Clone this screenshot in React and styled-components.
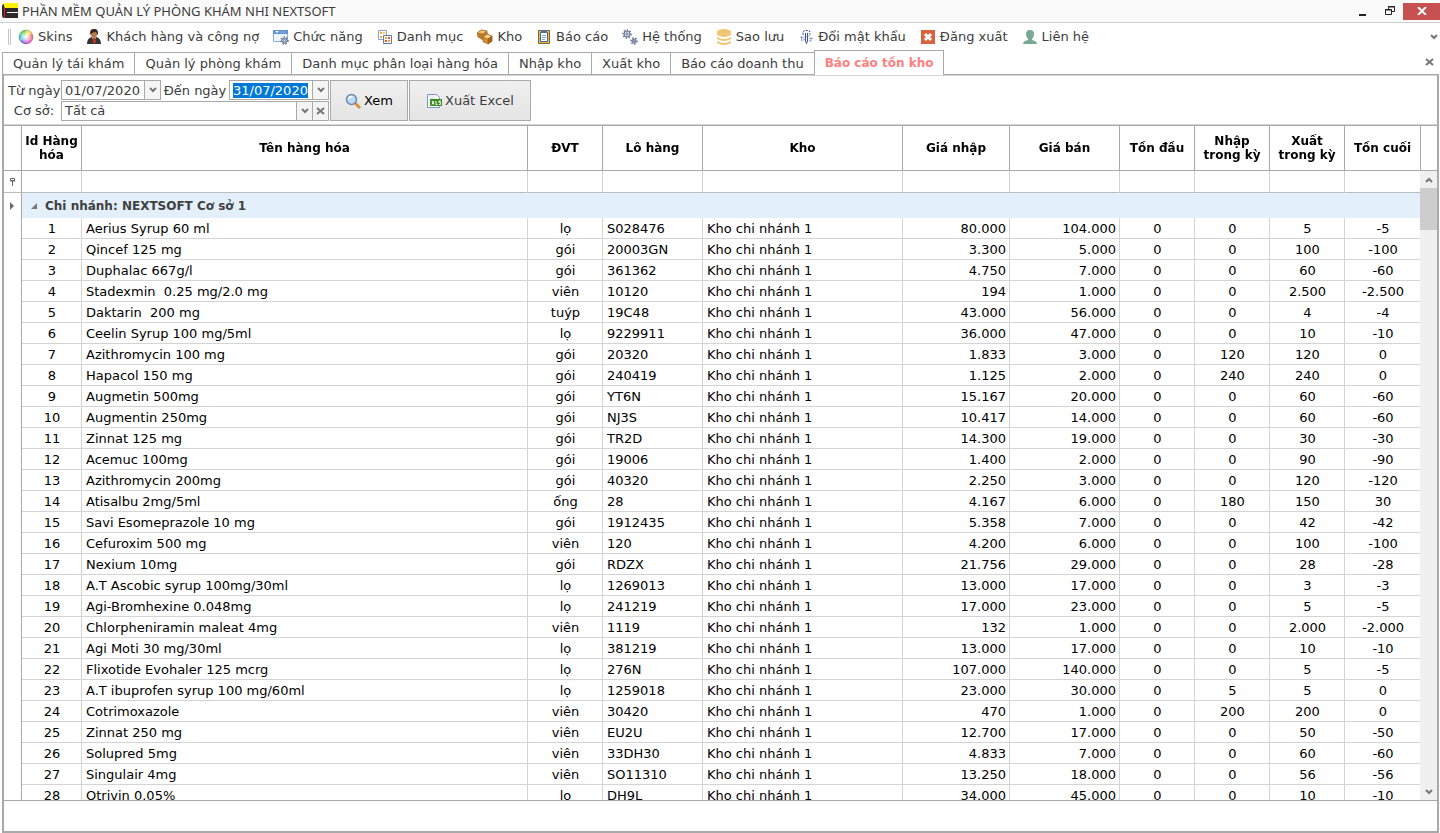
import React, { useEffect, useRef } from "react";
import styled, { createGlobalStyle } from "styled-components";

const menuItems = [
  { label: "Skins", icon: "skins" },
  { label: "Khách hàng và công nợ", icon: "customer" },
  { label: "Chức năng", icon: "feature" },
  { label: "Danh mục", icon: "category" },
  { label: "Kho", icon: "stock" },
  { label: "Báo cáo", icon: "report" },
  { label: "Hệ thống", icon: "system" },
  { label: "Sao lưu", icon: "backup" },
  { label: "Đổi mật khẩu", icon: "password" },
  { label: "Đăng xuất", icon: "logout" },
  { label: "Liên hệ", icon: "contact" },
];

const tabs = [
  "Quản lý tái khám",
  "Quản lý phòng khám",
  "Danh mục phân loại hàng hóa",
  "Nhập kho",
  "Xuất kho",
  "Báo cáo doanh thu",
  "Báo cáo tồn kho",
];

const columns = [
  { title: "Id Hàng hóa", width: 60, align: "center" },
  { title: "Tên hàng hóa", align: "left" },
  { title: "ĐVT", width: 75, align: "center" },
  { title: "Lô hàng", width: 100, align: "left" },
  { title: "Kho", width: 200, align: "left" },
  { title: "Giá nhập", width: 107, align: "right" },
  { title: "Giá bán", width: 110, align: "right" },
  { title: "Tồn đầu", width: 75, align: "center" },
  { title: "Nhập trong kỳ", width: 75, align: "center" },
  { title: "Xuất trong kỳ", width: 75, align: "center" },
  { title: "Tồn cuối", width: 75, align: "center" },
];

// name, unit, lot, buy price, sell price, in, out, closing
const products = [
  ["Aerius Syrup 60 ml", "lọ", "S028476", "80.000", "104.000", "0", "5", "-5"],
  ["Qincef 125 mg", "gói", "20003GN", "3.300", "5.000", "0", "100", "-100"],
  ["Duphalac 667g/l", "gói", "361362", "4.750", "7.000", "0", "60", "-60"],
  ["Stadexmin  0.25 mg/2.0 mg", "viên", "10120", "194", "1.000", "0", "2.500", "-2.500"],
  ["Daktarin  200 mg", "tuýp", "19C48", "43.000", "56.000", "0", "4", "-4"],
  ["Ceelin Syrup 100 mg/5ml", "lọ", "9229911", "36.000", "47.000", "0", "10", "-10"],
  ["Azithromycin 100 mg", "gói", "20320", "1.833", "3.000", "120", "120", "0"],
  ["Hapacol 150 mg", "gói", "240419", "1.125", "2.000", "240", "240", "0"],
  ["Augmetin 500mg", "gói", "YT6N", "15.167", "20.000", "0", "60", "-60"],
  ["Augmentin 250mg", "gói", "NJ3S", "10.417", "14.000", "0", "60", "-60"],
  ["Zinnat 125 mg", "gói", "TR2D", "14.300", "19.000", "0", "30", "-30"],
  ["Acemuc 100mg", "gói", "19006", "1.400", "2.000", "0", "90", "-90"],
  ["Azithromycin 200mg", "gói", "40320", "2.250", "3.000", "0", "120", "-120"],
  ["Atisalbu 2mg/5ml", "ống", "28", "4.167", "6.000", "180", "150", "30"],
  ["Savi Esomeprazole 10 mg", "gói", "1912435", "5.358", "7.000", "0", "42", "-42"],
  ["Cefuroxim 500 mg", "viên", "120", "4.200", "6.000", "0", "100", "-100"],
  ["Nexium 10mg", "gói", "RDZX", "21.756", "29.000", "0", "28", "-28"],
  ["A.T Ascobic syrup 100mg/30ml", "lọ", "1269013", "13.000", "17.000", "0", "3", "-3"],
  ["Agi-Bromhexine 0.048mg", "lọ", "241219", "17.000", "23.000", "0", "5", "-5"],
  ["Chlorpheniramin maleat 4mg", "viên", "1119", "132", "1.000", "0", "2.000", "-2.000"],
  ["Agi Moti 30 mg/30ml", "lọ", "381219", "13.000", "17.000", "0", "10", "-10"],
  ["Flixotide Evohaler 125 mcrg", "lọ", "276N", "107.000", "140.000", "0", "5", "-5"],
  ["A.T ibuprofen syrup 100 mg/60ml", "lọ", "1259018", "23.000", "30.000", "5", "5", "0"],
  ["Cotrimoxazole", "viên", "30420", "470", "1.000", "200", "200", "0"],
  ["Zinnat 250 mg", "viên", "EU2U", "12.700", "17.000", "0", "50", "-50"],
  ["Solupred 5mg", "viên", "33DH30", "4.833", "7.000", "0", "60", "-60"],
  ["Singulair 4mg", "viên", "SO11310", "13.250", "18.000", "0", "56", "-56"],
  ["Otrivin 0.05%", "lọ", "DH9L", "34.000", "45.000", "0", "10", "-10"],
];

const rows = products.map(([name, unit, lot, buy, sell, inQty, outQty, closing], i) => [
  i + 1, name, unit, lot, "Kho chi nhánh 1", buy, sell, "0", inQty, outQty, closing,
]);

function App() {
  return (
    <Window>
      <GlobalStyle />
      <TitleBar />
      <MenuBar />
      <TabBar />
      <Frame>
        <Filters />
        <StockGrid />
        <Footer />
      </Frame>
    </Window>
  );
}

export default App;

function TitleBar() {
  return (
    <Title>
      <Icon name="app" />
      <h1>PHẦN MỀM QUẢN LÝ PHÒNG KHÁM NHI NEXTSOFT</h1>
      <WindowButton aria-label="Minimize">
        <svg width="12" height="12" viewBox="0 0 12 12">
          <path d="M2 9h7v2H2z" fill="#222" />
        </svg>
      </WindowButton>
      <WindowButton aria-label="Restore">
        <svg width="12" height="12" viewBox="0 0 12 12" fill="none" stroke="#222">
          <path d="M4.500 4V1.500h6v5H8M4 2h7" />
          <path d="M1.500 4.500h6v5h-6zM1 5h7" />
        </svg>
      </WindowButton>
      <WindowButton aria-label="Close" $danger>
        <svg width="10" height="8" viewBox="0 0 10 8">
          <path d="M1 0l8 8M9 0L1 8" stroke="#fff" strokeWidth="2" />
        </svg>
      </WindowButton>
    </Title>
  );
}

function MenuBar() {
  return (
    <Menu>
      <Grip />
      {menuItems.map((item) => (
        <MenuButton key={item.label}>
          <Icon name={item.icon} />
          {item.label}
        </MenuButton>
      ))}
      <MoreButton aria-label="More">
        <Chevron />
      </MoreButton>
    </Menu>
  );
}

function TabBar() {
  return (
    <TabList>
      {tabs.map((tab) => (
        <Tab key={tab} $active={tab === "Báo cáo tồn kho"}>{tab}</Tab>
      ))}
      <MoreButton aria-label="Close tab">
        <Cross />
      </MoreButton>
    </TabList>
  );
}

function Filters() {
  const toDate = useRef(null);

  useEffect(() => {
    toDate.current.focus();
    toDate.current.select();
  }, []);

  return (
    <FilterBar>
      <Fields>
        <label htmlFor="from">Từ ngày</label>
        <Field>
          <input id="from" defaultValue="01/07/2020" />
          <FieldButton aria-label="Open calendar"><Chevron /></FieldButton>
        </Field>
        <label htmlFor="to">Đến ngày</label>
        <Field>
          <input id="to" ref={toDate} defaultValue="31/07/2020" />
          <FieldButton aria-label="Open calendar"><Chevron /></FieldButton>
        </Field>
        <label htmlFor="branch">Cơ sở:</label>
        <Field $wide>
          <select id="branch">
            <option>Tất cả</option>
          </select>
          <FieldButton aria-label="Open list"><Chevron /></FieldButton>
          <FieldButton aria-label="Clear"><Cross /></FieldButton>
        </Field>
      </Fields>
      <ActionButton $primary>
        <Icon name="search" />
        Xem
      </ActionButton>
      <ActionButton>
        <Icon name="excel" />
        Xuất Excel
      </ActionButton>
    </FilterBar>
  );
}

function StockGrid() {
  return (
    <Grid>
      <Scroller>
        <Table>
          <colgroup>
            <Col $width={18} />
            {columns.map((c) => <Col key={c.title} $width={c.width} />)}
          </colgroup>
          <thead>
            <tr>
              <HeadCell />
              {columns.map((c) => <HeadCell key={c.title}>{c.title}</HeadCell>)}
            </tr>
            <tr>
              <FilterCell $indicator>
                <svg width="7" height="9" viewBox="0 0 7 9" fill="none" stroke="#666">
                  <path d="M1.500 1.500h4v2h-4zM1 4h5M3.500 4v5" />
                </svg>
              </FilterCell>
              {columns.map((c) => <FilterCell key={c.title} />)}
            </tr>
          </thead>
          <tbody>
            <tr>
              <Indicator>
                <svg width="5" height="8" viewBox="0 0 5 8">
                  <path d="M0 0l4 4-4 4z" fill="#6a6a6a" />
                </svg>
              </Indicator>
              <GroupCell colSpan={columns.length}>
                <svg width="7" height="7" viewBox="0 0 7 7">
                  <path d="M6 0v6H0z" fill="#777" />
                </svg>
                Chi nhánh: NEXTSOFT Cơ sở 1
              </GroupCell>
            </tr>
            {rows.map((row) => (
              <tr key={row[0]}>
                <Indicator />
                {row.map((value, i) => (
                  <Cell key={columns[i].title} $align={columns[i].align}>{value}</Cell>
                ))}
              </tr>
            ))}
          </tbody>
        </Table>
      </Scroller>
      <ScrollBar>
        <ScrollCorner />
        <ScrollArrow aria-label="Scroll up"><Chevron up /></ScrollArrow>
        <Thumb />
        <ScrollArrow aria-label="Scroll down"><Chevron /></ScrollArrow>
      </ScrollBar>
    </Grid>
  );
}

function Chevron({ up }) {
  return (
    <svg width="8" height="6" viewBox="0 0 8 6" fill="none" stroke="#777" strokeWidth="2">
      <path d={up ? "M1 5l3-3 3 3" : "M1 1l3 3 3-3"} />
    </svg>
  );
}

function Cross() {
  return (
    <svg width="9" height="8" viewBox="0 0 9 8" stroke="#777" strokeWidth="2">
      <path d="M1 1l7 6M8 1L1 7" />
    </svg>
  );
}

const gear = (x, y, r) => (
  <g key={x} transform={`translate(${x} ${y})`} fill="none" stroke="#66728f">
    <circle r={r} strokeWidth="1.500" strokeDasharray="1.500 1.500" />
    <circle r={r - 1} fill="#d3dbe9" />
    <circle r="1" fill="#fff" />
  </g>
);

const drawings = {
  app: (
    <>
      <path d="M0 3q0-2 3-2v4H0zM0 7h16v8H2q-2 0-2-3z" fill="#2e2a2b" />
      <path d="M2 0h14v5H4Q2 5 2 3z" fill="#fff200" />
      <path d="M0 5h16v2H0z" fill="#2e2a2b" />
      <path d="M5 9h11v1H5z" fill="#fafafa" />
      <path d="M2.500 5v10" stroke="#e02020" />
    </>
  ),
  skins: (
    <>
      <defs>
        <radialGradient id="wheel">
          <stop offset="0" stopColor="#fff" />
          <stop offset=".4" stopColor="#fff" stopOpacity=".7" />
          <stop offset="1" stopColor="#fff" stopOpacity="0" />
        </radialGradient>
      </defs>
      <path d="M8 8V1a7 7 0 0 1 6 3.500z" fill="#f3d93c" />
      <path d="M8 8l6-3.500a7 7 0 0 1 0 7z" fill="#f0605c" />
      <path d="M8 8l6 3.500A7 7 0 0 1 8 15z" fill="#e83fc4" />
      <path d="M8 8v7a7 7 0 0 1-6-3.500z" fill="#6a62ea" />
      <path d="M8 8l-6 3.500a7 7 0 0 1 0-7z" fill="#2fc4cf" />
      <path d="M8 8L2 4.500A7 7 0 0 1 8 1z" fill="#54cf3c" />
      <circle cx="8" cy="8" r="7" fill="url(#wheel)" />
      <circle cx="8" cy="8" r="7" fill="none" stroke="#666" opacity=".4" />
    </>
  ),
  customer: (
    <>
      <path d="M1 15q0-6 5-7h4q5 1 5 7z" fill="#343434" />
      <path d="M6 8h4l-2 5z" fill="#fff" />
      <path d="M7 9h2l1 4-2 2-1-2z" fill="#d23322" />
      <ellipse cx="8" cy="5" rx="3" ry="4" fill="#b47a4c" />
      <path d="M4.500 6Q3 1 7 0q5-1 5 5l-1 1q0-3-2-3-3 0-4.500 3z" fill="#3a241b" />
    </>
  ),
  feature: (
    <>
      <path d="M.5 1.500h14v11H.5z" fill="#eef4fc" stroke="#8db0dd" />
      <path d="M0 1h15v4H0z" fill="#5f92d2" />
      <path d="M2 2h4L4 4z" fill="#fff" />
      <path d="M7 3h6" stroke="#8fb4e2" />
      {gear(11.500, 11.500, 3.500)}
    </>
  ),
  category: (
    <>
      <path d="M1.500 1.500h8v9h-8z" fill="#fff" stroke="#8da0c8" />
      <path d="M3 3h2v2H3zM3 7h2v2H3z" fill="#f3a93c" />
      <path d="M6 3h2v2H6z" fill="#f4c94a" />
      <path d="M6.500 6.500h8v8h-8z" fill="#fff" stroke="#6479a4" />
      <path d="M8 8h2v2H8zM11 11h2v2h-2z" fill="#f7a521" />
      <path d="M11 8h2v2h-2zM8 11h2v2H8z" fill="#ed5338" />
    </>
  ),
  stock: (
    <g stroke="#955916" strokeWidth=".5">
      <path d="M0 4l4-3 6 1 1 6-5 3-5-3z" fill="#c07a28" />
      <path d="M0 4l4-3 6 1-4 3z" fill="#f2c274" />
      <path d="M6 8l4-3 5 2v5l-4 3-5-2z" fill="#d58c30" />
      <path d="M6 8l4-3 5 2-4 3z" fill="#f8d08a" />
      <path d="M11 10l4-3v5l-4 3z" fill="#a86518" />
    </g>
  ),
  report: (
    <>
      <path d="M2.500 1.500h11v13h-11z" fill="#eeb83f" stroke="#7f6531" />
      <path d="M4.500 3.500h7v9h-7z" fill="#fff" stroke="#3768a8" />
      <path d="M5 1h6v3H5z" fill="#4f719f" />
      <path d="M6 6.500h4M6 8.500h4M6 10.500h3" stroke="#88a6d4" />
    </>
  ),
  system: (
    <>
      {gear(5, 5, 4)}
      {gear(12, 12, 3)}
    </>
  ),
  backup: (
    <g fill="#f0c471">
      <ellipse cx="8" cy="3" rx="7" ry="3" />
      <path d="M1 4v2q7 4 14 0V4q-7 4-14 0z" />
      <path d="M1 8v2q7 4 14 0V8q-7 4-14 0z" />
      <path d="M1 12v2q7 4 14 0v-2q-7 4-14 0z" />
    </g>
  ),
  password: (
    <g fill="none" stroke="#3d4fa0">
      <path d="M5 5.500V2.500l2-1h3l2 1v3l-2 2H7z" strokeDasharray="2 1" />
      <path d="M7.500 4v8l1 2.500 1-2.500V4" />
      <path d="M2 8.500h4M3.500 7v4M11 9.500h4M13 8v4M3 12l4-2M11 11l2 2" stroke="#97a4d2" />
    </g>
  ),
  logout: (
    <>
      <path d="M1 1h14v14H1z" fill="#d9623f" />
      <path d="M5 5l6 6M11 5l-6 6" stroke="#fff" strokeWidth="3" />
    </>
  ),
  contact: (
    <path
      d="M8 1q4 0 4 4 0 3-2 5v1q5 1 5 4H1q0-3 5-4v-1Q4 8 4 5q0-4 4-4z"
      fill="#78a896"
    />
  ),
  search: (
    <>
      <path d="M10 10l5 5" stroke="#d7923a" strokeWidth="3" />
      <circle cx="6.500" cy="6.500" r="5" fill="#b9dcf8" stroke="#7388a9" strokeWidth="1.500" />
      <path d="M3.500 6q1-3 4-2" stroke="#fff" fill="none" strokeWidth="1.500" />
    </>
  ),
  excel: (
    <>
      <path d="M1.500 1.500h9l3 3v10h-12z" fill="#fff" stroke="#7d93c4" />
      <path d="M3 5h7M3 3h5" stroke="#d5deef" />
      <path d="M4 6h12v7H4z" fill="#3a8a1e" />
      <path d="M6 8l2 3.500M8 8l-2 3.500M10 8v3.500h1.500M15 8h-2v1.500h1.500v2H13" stroke="#fff" fill="none" />
    </>
  ),
};

function Icon({ name }) {
  return (
    <svg width="16" height="16" viewBox="0 0 16 16" aria-hidden="true">
      {drawings[name]}
    </svg>
  );
}

const GlobalStyle = createGlobalStyle`
  * {
    box-sizing: border-box;
  }

  body {
    margin: 0;
    background: #fff;
    color: #3c3c3c;
    font-family: "DejaVu Sans", Verdana, sans-serif;
    font-size: 13px;
  }

  button, input, select {
    border: 0;
    padding: 0;
    margin: 0;
    background: none;
    color: inherit;
    font: inherit;
    outline: none;
  }

  svg {
    flex: none;
    display: block;
  }

  ::selection {
    background: #0078d7;
    color: #fff;
  }
`

const Window = styled.div`
  height: 100vh;
  display: flex;
  flex-direction: column;
`

const Title = styled.header`
  height: 23px;
  display: flex;
  align-items: center;
  padding-left: 2px;
  background: #fafafa;
  border-bottom: 1px solid #d0d0d0;

  h1 {
    flex: 1;
    margin: 0 0 0 4px;
    font-family: "Noto Sans", "Open Sans", sans-serif;
    font-size: 13px;
    font-weight: 400;
  }
`

const WindowButton = styled.button`
  width: ${(props) => (props.$danger ? "37px" : "27px")};
  height: 17px;
  display: flex;
  align-items: center;
  justify-content: center;
  background: ${(props) => (props.$danger ? "#c75050" : "transparent")};
`

const Menu = styled.nav`
  height: 27px;
  display: flex;
  align-items: center;
  gap: 14px;
  padding: 0 2px 0 8px;
`

const Grip = styled.span`
  width: 3px;
  height: 16px;
  margin-right: -7px;
  border-left: 1px solid #c4c4c4;
  border-right: 1px solid #c4c4c4;
`

const MenuButton = styled.button`
  display: flex;
  align-items: center;
  gap: 4px;
  white-space: nowrap;
`

const MoreButton = styled.button`
  margin-left: auto;
`

const TabList = styled.nav`
  height: 24px;
  display: flex;
  align-items: flex-end;
  padding: 0 6px 0 2px;

  ${MoreButton} {
    align-self: center;
  }
`

const Tab = styled.button`
  height: ${(props) => (props.$active ? "25px" : "22px")};
  padding: 0 10px;
  border: 1px solid #a9a9a9;
  border-bottom: 0;
  margin-bottom: ${(props) => (props.$active ? "-1px" : "0")};
  margin-right: -1px;
  background: #fff;
  color: ${(props) => (props.$active ? "#ff8080" : "inherit")};
  font-size: ${(props) => (props.$active ? "12px" : "13px")};
  font-weight: ${(props) => (props.$active ? 700 : 400)};
  white-space: nowrap;
  position: relative;
`

const Frame = styled.main`
  flex: 1;
  min-height: 0;
  display: flex;
  flex-direction: column;
  margin: 0 1px 0 2px;
  border: 2px solid #a9a9a9;
  border-top-width: 1px;
`

const FilterBar = styled.form`
  display: flex;
  gap: 1px;
  padding: 4px 4px 3px;
  border-top: 1px solid #d4d4d4;
  border-bottom: 1px solid #d4d4d4;
`

const Fields = styled.div`
  display: grid;
  grid-template-columns: 52px 100px 66px 100px;
  column-gap: 1px;
  align-items: center;

  label {
    text-align: center;
    white-space: nowrap;
  }
`

const Field = styled.div`
  height: 20px;
  display: flex;
  grid-column: ${(props) => (props.$wide ? "span 3" : "auto")};
  border: 1px solid #a9a9a9;

  input, select {
    flex: 1;
    width: 0;
    padding-left: 3px;
    appearance: none;
  }
`

const FieldButton = styled.button.attrs({ type: "button" })`
  width: 16px;
  display: flex;
  align-items: center;
  justify-content: center;
  border-left: 1px solid #a9a9a9;
  background: #f4f4f4;
`

const ActionButton = styled.button.attrs({ type: "button" })`
  height: 41px;
  display: flex;
  align-items: center;
  gap: 3px;
  padding: 0 ${(props) => (props.$primary ? "14px" : "16px")};
  border: 1px solid #a9a9a9;
  background: linear-gradient(#f0f0f0, #e4e4e4);
  color: ${(props) => (props.$primary ? "#000" : "inherit")};
`

const Grid = styled.section`
  flex: 1;
  min-height: 0;
  display: flex;
  border-top: 1px solid #a9a9a9;
  border-bottom: 1px solid #a9a9a9;
`

const Scroller = styled.div`
  flex: 1;
  overflow-y: auto;
  scrollbar-width: none;
`

const Table = styled.table`
  width: 100%;
  table-layout: fixed;
  border-collapse: separate;
  border-spacing: 0;
  color: #000;

  thead {
    position: sticky;
    top: 0;
    background: #fff;
  }

  th:last-child, td:last-child {
    border-right: 0;
  }
`

const Col = styled.col`
  width: ${(props) => (props.$width ? `${props.$width}px` : "auto")};
`

const HeadCell = styled.th`
  height: 45px;
  padding: 0 2px;
  border-right: 1px solid #a9a9a9;
  border-bottom: 1px solid #a9a9a9;
  font-size: 12px;
  line-height: 14px;
`

const FilterCell = styled.td`
  height: 22px;
  padding: 0;
  border-right: 1px solid ${(props) => (props.$indicator ? "#a9a9a9" : "#d4d4d4")};
  border-bottom: 1px solid #bcbcbc;

  svg {
    margin: 0 auto;
  }
`

const Indicator = styled.td`
  padding: 0;
  border-right: 1px solid #a9a9a9;

  svg {
    margin: 0 auto;
  }
`

const GroupCell = styled.td`
  height: 25px;
  padding: 0 9px;
  background: #e3f0fb;
  color: #404040;
  font-size: 12px;
  font-weight: 700;

  svg {
    display: inline-block;
    margin-right: 7px;
  }
`

const Cell = styled.td`
  height: 21px;
  padding: 2px 3px 0 4px;
  border-right: 1px solid #d4d4d4;
  border-bottom: 1px solid #d4d4d4;
  overflow: hidden;
  text-align: ${(props) => props.$align};
  white-space: pre;
  line-height: 18px;
`

const ScrollBar = styled.div`
  width: 17px;
  display: flex;
  flex-direction: column;
  background: #f0f0f0;
`

const ScrollCorner = styled.div`
  height: 45px;
  background: #fff;
  border-left: 1px solid #a9a9a9;
  border-bottom: 1px solid #a9a9a9;
`

const ScrollArrow = styled.button`
  height: 17px;
  display: flex;
  align-items: center;
  justify-content: center;
`

const Thumb = styled.div`
  height: 42px;
  margin-bottom: auto;
  background: #cdcdcd;
`

const Footer = styled.footer`
  height: 30px;
`
